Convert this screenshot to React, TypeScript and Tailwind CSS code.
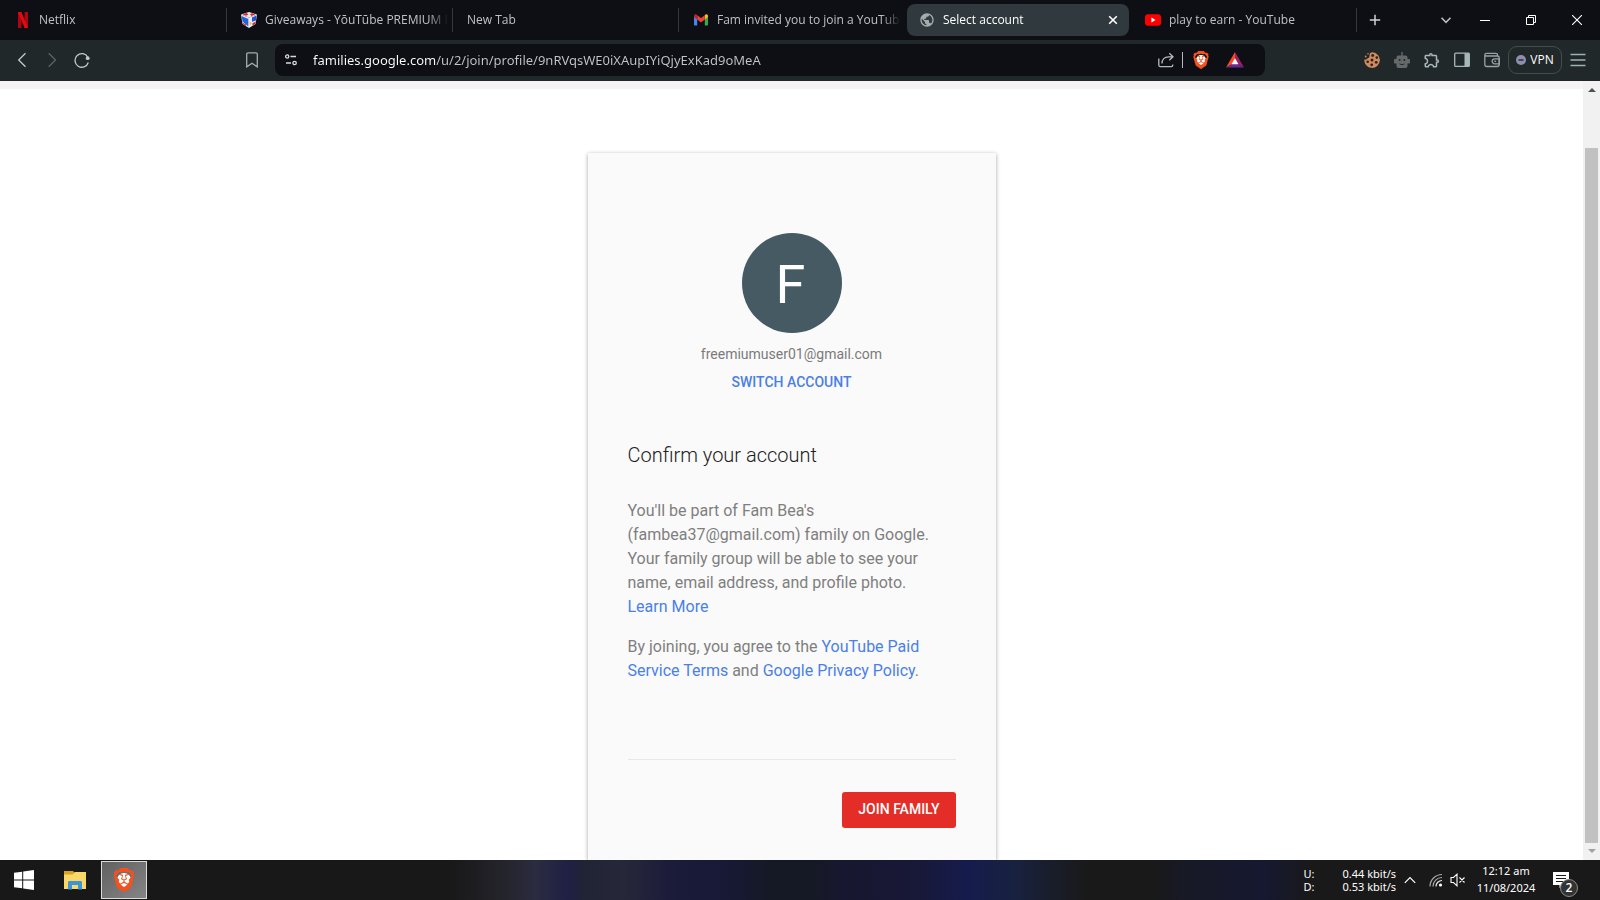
import type { ReactNode } from "react";
import { MdOutlineExtension, MdPublic } from "react-icons/md";
import { SiBrave } from "react-icons/si";

const UI_FONT = "font-['Open_Sans','Noto_Sans',sans-serif]";

function NetflixIcon() {
  return (
    <svg viewBox="0 0 16 16" className="size-4">
      <path d="M3 0h3.4v16H3zM9.600 0H13v16H9.600z" fill="#b1060f" />
      <path d="M3 0h3.400l6.600 16H9.600z" fill="#e50914" />
    </svg>
  );
}

function CubeIcon() {
  return (
    <svg viewBox="0 0 16 16" className="size-4">
      <path d="M0 2.500 8 0l8 2.500L8 5.500z" fill="#e9e9ee" />
      <path d="M1.500 2.300 5.500 1.100 7.500 2.500 5 3.800zM9 2.300 11 1.200l3.500 1.100L10.500 4z" fill="#dc2430" />
      <path d="M0 2.500 8 5.500V16L1.500 12z" fill="#e6e7ef" />
      <path d="M.6 4 7.300 7v7.500L1.600 9.500z" fill="#2460d8" />
      <path d="M1.400 10.400 5 12.600v1.700L1.800 12z" fill="#e02c38" />
      <path d="M16 2.500 8 5.500V16l6.500-4z" fill="#ecebf0" />
      <path d="m15.500 3.500-4.500 2v4.200l4 -1.200z" fill="#1f55cf" />
      <path d="M11.500 11.200 14.700 9.500l-.4 2.300-2.800 1.900z" fill="#d8242d" />
      <path d="m8.500 9.500 2.300 1.500-1.800 2.500z" fill="#f2b93a" />
    </svg>
  );
}

function GmailIcon() {
  return (
    <svg viewBox="0 0 16 16" className="size-4">
      <path d="M1 4v8.500c0 .6.400 1 1 1h2.200V6.500z" fill="#4285f4" />
      <path d="M15 4v8.500c0 .6-.4 1-1 1h-2.200V6.500z" fill="#34a853" />
      <path d="M11.800 3.200v4.300L15 5V4c0-1.500-1.700-2.100-2.700-1.300z" fill="#fbbc04" />
      <path d="M4.200 7.500V3.200L8 6.100l3.800-2.900v4.300L8 10.400z" fill="#ea4335" />
      <path d="M1 4v1l3.200 2.500V3.200l-.5-.5C2.700 1.900 1 2.500 1 4z" fill="#c5221f" />
    </svg>
  );
}

function YouTubeIcon() {
  return (
    <svg viewBox="0 0 16 16" className="size-4">
      <rect y="2.300" width="16" height="11.400" rx="3" fill="#f00" />
      <path d="m6.400 5.600 4.200 2.400-4.200 2.400z" fill="#fff" />
    </svg>
  );
}

function BraveIcon({ size, back }: { size: string; back: string }) {
  return (
    <span className="relative flex items-center justify-center">
      <span className={`absolute rounded-full bg-white ${back}`} />
      <SiBrave className={`relative text-[#f4511e] ${size}`} />
    </span>
  );
}

type Tab = { title: string; icon?: ReactNode; active?: boolean };

const tabs: Tab[] = [
  { title: "Netflix", icon: <NetflixIcon /> },
  { title: "Giveaways - YōuTūbe PREMIUM F", icon: <CubeIcon /> },
  { title: "New Tab" },
  { title: "Fam invited you to join a YouTube", icon: <GmailIcon /> },
  { title: "Select account", icon: <MdPublic className="size-4 text-[#a6abae]" />, active: true },
  { title: "play to earn - YouTube", icon: <YouTubeIcon /> },
];

function TabItem({ tab, divider }: { tab: Tab; divider: boolean }) {
  return (
    <div className="flex h-10 max-w-[226px] min-w-0 flex-1 items-center">
      <div
        className={
          tab.active
            ? "mx-0.5 flex h-8 min-w-0 flex-1 items-center gap-2 rounded-lg bg-[#30393d] pr-2 pl-3 text-white"
            : "flex h-8 min-w-0 flex-1 items-center gap-2 pr-1 pl-3.5 text-[#bfc1c4]"
        }
      >
        {tab.icon && <span className="shrink-0">{tab.icon}</span>}
        <button
          type="button"
          className="min-w-0 flex-1 overflow-hidden text-left text-[12px] leading-5 whitespace-nowrap [mask-image:linear-gradient(90deg,#000_calc(100%-20px),transparent)]"
        >
          {tab.title}
        </button>
        {tab.active && (
          <button type="button" aria-label="Close tab" className="flex size-4 items-center justify-center">
            <svg viewBox="0 0 10 10" className="size-2.5" stroke="#fff" strokeWidth="1.600">
              <path d="M1.200 1.200 8.800 8.800M8.800 1.200 1.200 8.800" />
            </svg>
          </button>
        )}
      </div>
      {divider && <span className="h-6 w-px shrink-0 bg-[#34373b]" />}
    </div>
  );
}

function TabBar() {
  return (
    <header className="flex h-10 shrink-0 items-center bg-[#0d0f14] pl-px">
      <nav aria-label="Tabs" className="flex min-w-0 flex-1">
        {tabs.map((tab, i) => (
          <TabItem key={tab.title} tab={tab} divider={!tab.active && !tabs[i + 1]?.active} />
        ))}
        <button type="button" aria-label="New tab" className="ml-0.5 flex h-10 w-8 items-center justify-center">
          <svg viewBox="0 0 12 12" className="size-3" stroke="#d0d3d6" strokeWidth="1.500">
            <path d="M6 .8v10.400M.8 6h10.400" />
          </svg>
        </button>
      </nav>
      <button type="button" aria-label="Search tabs" className="flex h-10 w-8 items-center justify-center">
        <svg viewBox="0 0 12 12" className="size-3" fill="none" stroke="#b9bcc0" strokeWidth="1.600">
          <path d="m1.500 3.800 4.500 4.500 4.500-4.500" />
        </svg>
      </button>
      <button type="button" aria-label="Minimise" className="flex h-10 w-[46px] items-center justify-center">
        <svg viewBox="0 0 10 10" className="size-2.5" stroke="#fff">
          <path d="M0 5.500h10" />
        </svg>
      </button>
      <button type="button" aria-label="Restore" className="flex h-10 w-[46px] items-center justify-center">
        <svg viewBox="0 0 10 10" className="size-2.5" fill="none" stroke="#fff">
          <path d="M.5 2.500h7v7h-7zM2.500 2.500v-2h7v7h-2" />
        </svg>
      </button>
      <button type="button" aria-label="Close window" className="flex h-10 w-[46px] items-center justify-center">
        <svg viewBox="0 0 10 10" className="size-2.5" stroke="#fff" strokeWidth="1.100">
          <path d="m0 0 10 10M10 0 0 10" />
        </svg>
      </button>
    </header>
  );
}

function ToolButton({ label, children }: { label: string; children: ReactNode }) {
  return (
    <button type="button" aria-label={label} className="flex h-8 w-[30px] shrink-0 items-center justify-center">
      {children}
    </button>
  );
}

function Toolbar() {
  return (
    <div className="flex h-[41px] shrink-0 items-center border-b border-[#2a2223] bg-[#212829] px-[7px]">
      <ToolButton label="Back">
        <svg viewBox="0 0 16 16" className="size-4" fill="none" stroke="#c3c8ca" strokeWidth="1.300">
          <path d="M11.500 1.200 4.700 8l6.800 6.800" />
        </svg>
      </ToolButton>
      <ToolButton label="Forward">
        <svg viewBox="0 0 16 16" className="size-4" fill="none" stroke="#5d6365" strokeWidth="1.300">
          <path d="M4.700 1.200 11.500 8l-6.800 6.800" />
        </svg>
      </ToolButton>
      <ToolButton label="Reload">
        <svg viewBox="0 0 16 16" className="size-4" fill="none" stroke="#c3c8ca" strokeWidth="1.300">
          <path d="M13.800 5.200A6.800 6.800 0 1 0 14.300 10.500" />
          <circle cx="13.700" cy="6.200" r="1.900" fill="#c3c8ca" stroke="none" />
        </svg>
      </ToolButton>
      <div className="ml-[140px]">
        <ToolButton label="Bookmark">
          <svg viewBox="0 0 16 16" className="size-4" fill="none" stroke="#a4adaf" strokeWidth="1.300">
            <path d="M2.700 2.200c0-.8.500-1.300 1.300-1.300h8c.8 0 1.300.5 1.300 1.300v12.700L8 11.200l-5.300 3.700z" />
          </svg>
        </ToolButton>
      </div>

      <div className="mr-[92px] ml-2 flex h-8 min-w-0 flex-1 items-center rounded-lg bg-[#0d0f14] pr-4">
        <button type="button" aria-label="Site information" className="flex h-8 w-8 shrink-0 items-center justify-center">
          <svg viewBox="0 0 12 12" className="size-3" fill="none" stroke="#d8dadc" strokeWidth="1.300">
            <circle cx="2.200" cy="2.500" r="1.600" />
            <path d="M5.500 2.500H11M1 9h5" />
            <circle cx="9.600" cy="9" r="1.700" />
          </svg>
        </button>
        <input
          type="text"
          aria-label="Address"
          spellCheck={false}
          defaultValue="families.google.com/u/2/join/profile/9nRVqsWE0iXAupIYiQjyExKad9oMeA"
          className="ml-1.5 h-8 min-w-0 flex-1 bg-[linear-gradient(90deg,#fff_123px,#c3c5c8_123px)] bg-clip-text font-['Noto_Sans',sans-serif] text-[13px] text-transparent caret-white outline-none"
        />
        <button type="button" aria-label="Share" className="flex size-7 shrink-0 items-center justify-center">
          <svg viewBox="0 0 16 16" className="size-4" fill="none" stroke="#b7babd" strokeWidth="1.300">
            <path d="M.8 6.500V13c0 1 .6 1.600 1.600 1.600h10.800c1 0 1.600-.6 1.600-1.600v-.5" />
            <path d="M4 11.500c0-4 2.500-6.700 6.500-6.700H15M11.300 1.300 15 4.800l-3.700 3.500" />
          </svg>
        </button>
        <span className="mx-0.5 h-4 w-px shrink-0 bg-[#b7babd]" />
        <button type="button" aria-label="Brave Shields" className="mx-0.5 flex size-7 shrink-0 items-center justify-center">
          <BraveIcon size="size-[18px]" back="size-2.5" />
        </button>
        <button type="button" aria-label="Brave Rewards" className="ml-1 flex size-7 shrink-0 items-center justify-center">
          <svg viewBox="0 0 18 16" className="h-4 w-[18px]">
            <path d="M9 0 0 15.500l9-5z" fill="#ff4724" />
            <path d="m9 0 9 15.500-9-5z" fill="#9e1f63" />
            <path d="M0 15.500h18l-9-5z" fill="#662d91" />
            <path d="m9 6.300 3.500 6h-7z" fill="#fff" />
          </svg>
        </button>
      </div>

      <ToolButton label="Cookie editor">
        <svg viewBox="0 0 16 16" className="size-4">
          <path d="M8.500.3A3 3 0 0 0 5.500 3 3 3 0 0 1 3.500 6.500 3 3 0 0 1 .3 7.500 7.800 7.800 0 1 0 8.500.3z" fill="#d18a5d" />
          <circle cx="1.700" cy="4.500" r=".9" fill="#d18a5d" />
          <circle cx="4" cy="1.800" r=".8" fill="#d18a5d" />
          <g fill="#2b2220">
            <circle cx="8.700" cy="3.500" r="1.400" />
            <circle cx="12.800" cy="5.600" r="1.300" />
            <circle cx="8" cy="8" r="1.500" />
            <circle cx="3.700" cy="9.700" r="1.300" />
            <circle cx="12.200" cy="10.300" r="1.400" />
            <circle cx="7.700" cy="12.800" r="1.400" />
          </g>
        </svg>
      </ToolButton>
      <ToolButton label="Assistant">
        <svg viewBox="0 0 16 16" className="size-4">
          <g fill="#66696a">
            <path d="M7.300 0h1.400v4H7.300z" />
            <path d="M4.500 3.500h7c1.100 0 2 .9 2 2V7H15c.6 0 1 .4 1 1v2.500c0 .6-.4 1-1 1h-1.500V14c0 1.100-.9 2-2 2h-7c-1.100 0-2-.9-2-2v-2.500H1c-.6 0-1-.4-1-1V8c0-.6.400-1 1-1h1.500V5.500c0-1.100.9-2 2-2z" />
          </g>
          <g fill="#212829">
            <circle cx="5.700" cy="8" r="1" />
            <circle cx="10.300" cy="8" r="1" />
          </g>
          <path d="M5.500 11.800c1.300 1 3.700 1 5 0" fill="none" stroke="#212829" strokeWidth="1" />
        </svg>
      </ToolButton>
      <ToolButton label="Extensions">
        <MdOutlineExtension className="size-[18px] text-[#a9b6ba]" />
      </ToolButton>
      <ToolButton label="Side panel">
        <svg viewBox="0 0 16 16" className="size-4" fill="none" stroke="#a9b6ba" strokeWidth="1.300">
          <rect x=".7" y="1.200" width="14.600" height="13.200" rx="1" />
          <path d="M10.500 1.200h4.800v13.200h-4.800z" fill="#a9b6ba" stroke="none" />
        </svg>
      </ToolButton>
      <ToolButton label="Wallet">
        <svg viewBox="0 0 16 16" className="size-4" fill="none" stroke="#97a3a6" strokeWidth="1.300">
          <path d="M13.500 4V3c0-1-.6-1.600-1.600-1.600H2.500C1.400 1.400.8 2 .8 3v9.500c0 1.200.8 2 2 2h10.400c1.200 0 2-.8 2-2V6c0-1.200-.8-2-2-2H2.500C1.500 4 .8 3.500.8 2.800" />
          <path d="M15.200 6.800h-4.500a2.500 2.500 0 0 0 0 5h4.500z" />
          <path d="M10.300 9.300h1.800" />
        </svg>
      </ToolButton>
      <button
        type="button"
        className="mx-px flex h-7 w-[54px] shrink-0 items-center justify-center gap-1 rounded-[9px] border border-[#464c4e] text-[12px] text-white"
      >
        <svg viewBox="0 0 10 10" className="size-2.5">
          <circle cx="5" cy="5" r="5" fill="#8e8fae" />
          <path d="M2.500 5h5" stroke="#212829" strokeWidth="1.400" />
        </svg>
        VPN
      </button>
      <ToolButton label="Menu">
        <svg viewBox="0 0 16 16" className="size-4" stroke="#9fb0b4" strokeWidth="1.300">
          <path d="M.5 2.500h15M.5 8h15M.5 13.500h15" />
        </svg>
      </ToolButton>
    </div>
  );
}

function ConfirmCard() {
  return (
    <section className="mt-16 flex w-[408px] flex-1 flex-col items-center bg-[#fafafa] px-10 pt-20 pb-8 shadow-[0_1px_4px_rgba(0,0,0,0.37)]">
      <div className="flex size-[100px] shrink-0 items-center justify-center rounded-full bg-[#455a62] pt-1 pr-0.5 text-[54px] leading-none text-white">
        F
      </div>
      <p className="mt-[11px] text-[14px] leading-5 text-[#7b7b7b]">freemiumuser01@gmail.com</p>
      <a href="#switch" className="mt-2 text-[14px] leading-5 font-medium text-[#4a7fe8]">
        SWITCH ACCOUNT
      </a>
      <div className="w-full">
        <h1 className="mt-[49px] text-[20px] leading-7 font-light text-[#212121]">Confirm your account</h1>
        <div className="mt-[30px] space-y-4 text-[16px] leading-6 text-[#7f7f7f]">
          <p>
            You'll be part of Fam Bea's (fambea37@gmail.com) family on Google. Your family group will be able to see your
            name, email address, and profile photo.{" "}
            <a href="#learn" className="block text-[#4a7fe8]">
              Learn More
            </a>
          </p>
          <p>
            By joining, you agree to the{" "}
            <a href="#terms" className="text-[#4a7fe8]">
              YouTube Paid Service Terms
            </a>{" "}
            and{" "}
            <a href="#privacy" className="text-[#4a7fe8]">
              Google Privacy Policy
            </a>
            .
          </p>
        </div>
        <hr className="mt-[76px] border-[#e8e8e8]" />
        <div className="mt-8 flex justify-end">
          <button
            type="button"
            className="h-9 rounded-[3px] bg-[#e52d27] px-4 pb-0.5 text-[14px] leading-5 font-medium text-white"
          >
            JOIN FAMILY
          </button>
        </div>
      </div>
    </section>
  );
}

function ScrollBar() {
  return (
    <div className="flex w-[17px] shrink-0 flex-col items-center bg-[#f1f1f1] pt-[7px]" aria-hidden="true">
      <svg viewBox="0 0 8 4" className="h-1 w-2">
        <path d="m4 0 4 4H0z" fill="#505050" />
      </svg>
      <div className="mt-14 w-[13px] flex-1 bg-[#c1c1c1]" />
      <svg viewBox="0 0 8 4" className="mt-1.5 mb-[7px] h-1 w-2">
        <path d="m4 4 4-4H0z" fill="#a3a3a3" />
      </svg>
    </div>
  );
}

function Taskbar() {
  return (
    <footer className="flex h-10 shrink-0 items-center bg-[linear-gradient(90deg,#181818_28%,#24242b_31.500%,#2b2c40_33.500%,#1f2045_35.500%,#202433_36.500%,#27273a_39%,#1b1b3a_42%,#171935_45.500%,#151926_48%,#151926_51%,#17172f_52.500%,#181838_57.500%,#151c4d_60.500%,#18213f_63.500%,#191d28_66%,#191919_68%,#191919_72%,#171925_74%,#151830_79%,#191919_82%)] text-white">
      <button type="button" aria-label="Start" className="flex h-10 w-12 items-center justify-center">
        <svg viewBox="0 0 20 20" className="size-5" fill="#fff">
          <path d="M0 2.800 8.200 1.700v7.800H0zM9.200 1.500 20 0v9.500H9.200zM0 10.500h8.200v7.800L0 17.200zM9.200 10.500H20V20L9.200 18.500z" />
        </svg>
      </button>
      <button type="button" aria-label="File Explorer" className="mr-px ml-0.5 flex h-10 w-[50px] items-center justify-center">
        <svg viewBox="0 0 22 20" className="h-5 w-[22px]">
          <path d="M0 1h9l2 2-2 3H0z" fill="#d9a21f" />
          <path d="M0 4.500h8.500L11 2h11v17H0z" fill="#fbd768" />
          <path d="M4 19.500V12.500C4 11.500 4.500 11 5.500 11h11c1 0 1.500.5 1.500 1.500v7h-4V15H8v4.500z" fill="#3a96d8" />
        </svg>
      </button>
      <button
        type="button"
        aria-label="Brave"
        className="flex h-[38px] w-[46px] items-center justify-center border border-[#dcdcdc] bg-linear-to-br from-[#616161] to-[#858585]"
      >
        <BraveIcon size="size-6" back="size-3.5" />
      </button>
      <div className="ml-auto grid grid-cols-[auto_auto] gap-x-7 font-['Noto_Sans',sans-serif] text-[11px] leading-[13px]">
        <span>U:</span>
        <span className="text-right">0.44 kbit/s</span>
        <span>D:</span>
        <span className="text-right">0.53 kbit/s</span>
      </div>
      <button type="button" aria-label="Hidden icons" className="ml-1.5 flex h-10 w-4 items-center justify-center">
        <svg viewBox="0 0 12 8" className="h-2 w-3" fill="none" stroke="#fff" strokeWidth="1.200">
          <path d="M.8 6.800 6 1.500l5.200 5.300" />
        </svg>
      </button>
      <button type="button" aria-label="Network" className="ml-2 flex h-10 w-5 items-center justify-center">
        <svg viewBox="0 0 14 14" className="size-3.5" fill="none" strokeWidth="1.200">
          <g stroke="#a8a8a8">
            <path d="M1 13.500A12 12 0 0 1 13 1.500M4 13.500a9 9 0 0 1 9-9" />
          </g>
          <path d="M7 13.500a6 6 0 0 1 6-6" stroke="#e8e8e8" />
          <circle cx="11.500" cy="12" r="1.600" fill="#fff" />
        </svg>
      </button>
      <button type="button" aria-label="Muted" className="flex h-10 w-6 items-center justify-center">
        <svg viewBox="0 0 16 14" className="h-3.5 w-4" fill="none" stroke="#fff" strokeWidth="1.100">
          <path d="M1 4.500h2.500L7 1.200v11.600L3.500 9.500H1zM9.500 4.500l5 5M14.500 4.500l-5 5" />
        </svg>
      </button>
      <button
        type="button"
        className="w-[72px] pb-0.5 text-center font-['Noto_Sans',sans-serif] text-[11px] leading-[17px] whitespace-nowrap"
      >
        12:12 am
        <br />
        11/08/2024
      </button>
      <button type="button" aria-label="Notifications" className="relative ml-2 flex h-10 w-[50px] items-center pl-[3px]">
        <svg viewBox="0 0 16 16" className="size-4">
          <path d="M0 0h16v13h-6l-3.500 3v-3H0z" fill="#fff" />
          <path d="M3 3.500h10M3 6.500h10M3 9.500h7" stroke="#191919" />
        </svg>
        <span className="absolute top-[19px] left-[10px] flex size-[18px] items-center justify-center rounded-full border border-[#8a8a8a] bg-[#333] text-[12px] leading-none font-semibold">
          2
        </span>
      </button>
    </footer>
  );
}

export default function App() {
  return (
    <div className={`flex h-screen flex-col overflow-hidden bg-white ${UI_FONT}`}>
      <TabBar />
      <Toolbar />
      <div className="flex min-h-0 flex-1">
        <main className="flex min-w-0 flex-1 flex-col items-center overflow-hidden border-t-8 border-[#f4f4f4] font-[Roboto,sans-serif]">
          <ConfirmCard />
        </main>
        <ScrollBar />
      </div>
      <Taskbar />
    </div>
  );
}
